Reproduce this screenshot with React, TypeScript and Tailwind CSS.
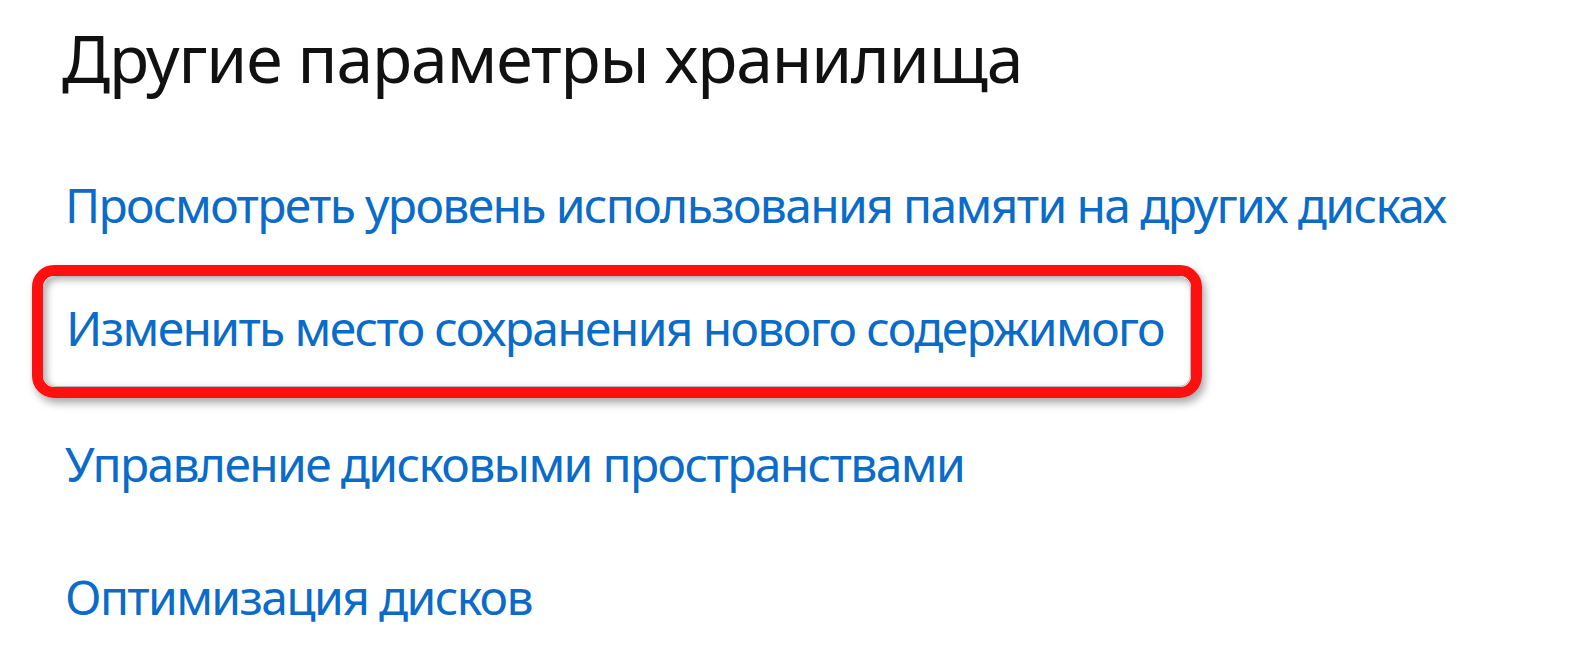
const font = { fontFamily: '"Noto Sans", "Open Sans", sans-serif' };

function Link({ children, className = '' }: { children: string; className?: string }) {
  return (
    <div className={`h-[60px] whitespace-nowrap text-[48px] leading-[60px] tracking-[-1.65px] text-[#0a6bc8] ${className}`}>
      {children}
    </div>
  );
}

export default function App() {
  return (
    <div className="h-[645px] w-[1570px] overflow-hidden bg-white" style={font}>
      <div className="flex flex-col pt-[17px]">
        <h1 className="ml-[62px] h-[80px] whitespace-nowrap text-[66px] font-normal leading-[80px] tracking-[-1.1px] text-[#111]">
          Другие параметры хранилища
        </h1>

        <Link className="ml-[65px] mt-[78px]">Просмотреть уровень использования памяти на других дисках</Link>

        {/* выделенный пункт */}
        <div className="ml-[32px] mt-[30px] h-[133px] w-[1170px] rounded-[22px] border-[11px] border-[#ff1010] shadow-[3px_5px_8px_rgba(0,0,0,0.35)]">
          <div className="h-full w-full rounded-[12px] border border-[#b4baba] pl-[22px] pt-[21px] shadow-[inset_3px_3px_7px_rgba(0,0,0,0.3)]">
            <Link>Изменить место сохранения нового содержимого</Link>
          </div>
        </div>

        <Link className="ml-[65px] mt-[36px]">Управление дисковыми пространствами</Link>

        <Link className="ml-[65px] mt-[73px]">Оптимизация дисков</Link>
      </div>
    </div>
  );
}
